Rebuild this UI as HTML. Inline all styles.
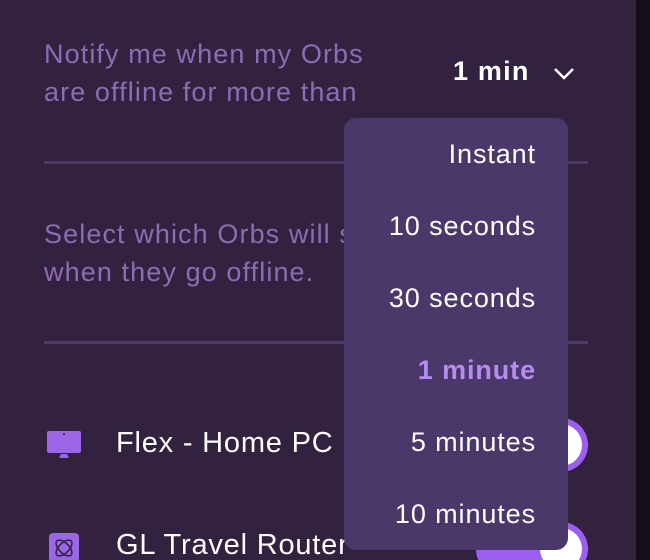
<!DOCTYPE html>
<html style="overflow:hidden;width:650px;height:560px"><head><style>
body{margin:0;width:650px;height:560px;overflow:hidden;background:#33223f;font-family:"Liberation Sans",sans-serif;position:relative}
.strip{position:absolute;left:636px;top:0;width:14px;height:560px;background:#150d1a}
.t{position:absolute;color:#8d6cb5;font-size:27px;letter-spacing:1.1px;line-height:38px;left:44px;white-space:nowrap}
.hr{position:absolute;left:44px;width:544px;height:3px;background:#4e3a6e}
.sel{position:absolute;left:453px;top:56px;color:#fff;font-weight:bold;font-size:27px;letter-spacing:1.2px}
.menu{position:absolute;left:344px;top:118px;width:224px;height:432px;background:#4b386b;border-radius:12px}
.it{position:absolute;right:32px;color:#fff;font-size:27px;letter-spacing:0.9px;line-height:30px;white-space:nowrap}
.tog{position:absolute;left:476px;width:112px;height:54px;border-radius:27px;background:#9d5ff0}
.knob{position:absolute;right:6px;top:6px;width:42px;height:42px;border-radius:50%;background:#fff}
.name{position:absolute;left:116px;color:#fff;font-size:29px;letter-spacing:0.8px;white-space:nowrap}
</style></head><body>
<div class="strip"></div>
<div class="t" style="top:35px">Notify me when my Orbs<br>are offline for more than</div>
<div class="sel">1 min</div>
<svg style="position:absolute;left:552px;top:66px" width="24" height="16" viewBox="0 0 24 16"><path d="M3 3l9 9 9-9" stroke="#fff" stroke-width="2.5" fill="none"/></svg>
<div class="hr" style="top:161px"></div>
<div class="t" style="top:215px">Select which Orbs will send alerts<br>when they go offline.</div>
<div class="hr" style="top:341px"></div>
<svg style="position:absolute;left:47px;top:431px" width="34" height="30" viewBox="0 0 34 30"><rect x="0" y="0" width="34" height="22" rx="2" fill="#9a66e6"/><circle cx="17" cy="3" r="1" fill="#33223f"/><path d="M12 27h10l-2-4h-6z" fill="#9a66e6"/></svg>
<div class="name" style="top:427px">Flex - Home PC</div>
<div class="tog" style="top:418px"><div class="knob"></div></div>
<svg style="position:absolute;left:49px;top:533px" width="30" height="30" viewBox="0 0 30 30"><rect width="30" height="30" rx="4" fill="#9a66e6"/><ellipse cx="15" cy="15" rx="10" ry="5" stroke="#33223f" stroke-width="1.5" fill="none" transform="rotate(45 15 15)"/><ellipse cx="15" cy="15" rx="10" ry="5" stroke="#33223f" stroke-width="1.5" fill="none" transform="rotate(-45 15 15)"/></svg>
<div class="name" style="top:529px">GL Travel Router</div>
<div class="tog" style="top:522px"><div class="knob"></div></div>
<div class="menu">
<div class="it" style="top:21px">Instant</div>
<div class="it" style="top:93px">10 seconds</div>
<div class="it" style="top:165px">30 seconds</div>
<div class="it" style="top:237px;color:#b58cf0;font-weight:bold">1 minute</div>
<div class="it" style="top:309px">5 minutes</div>
<div class="it" style="top:381px">10 minutes</div>
</div>
</body></html>
